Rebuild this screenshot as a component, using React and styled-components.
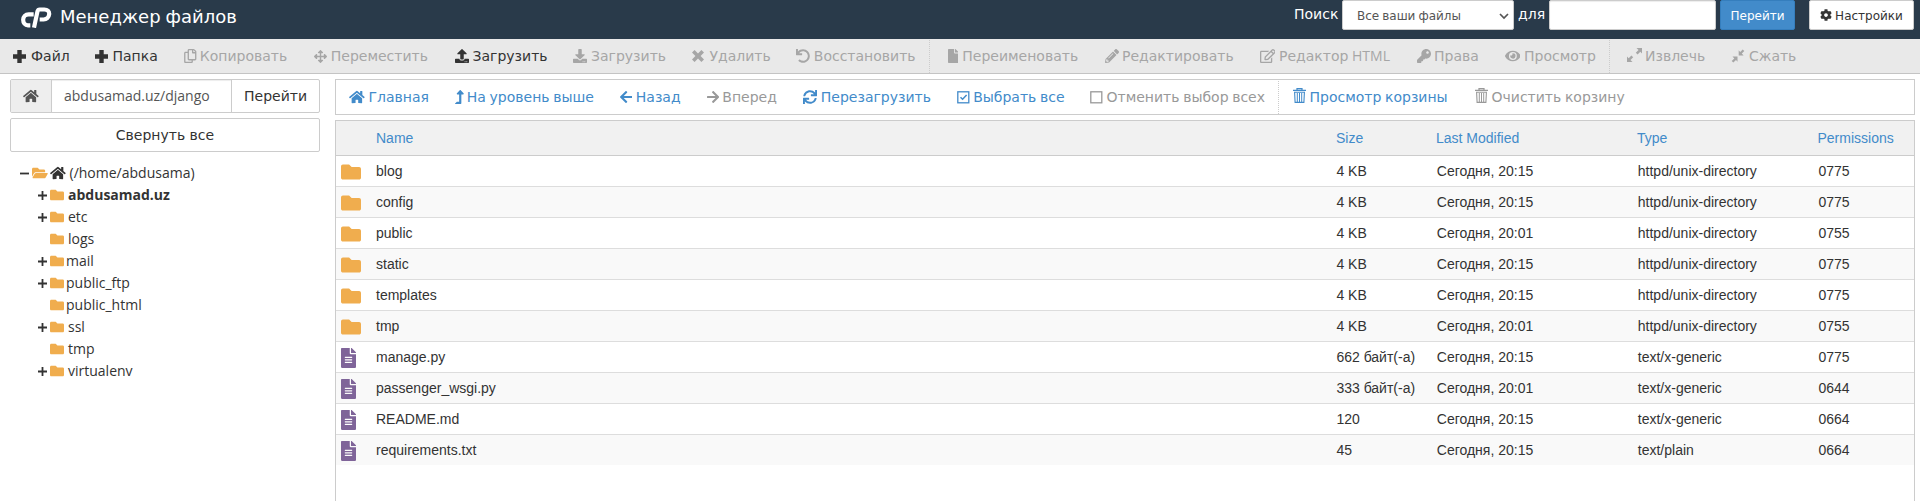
import React from "react";
import styled, { createGlobalStyle } from "styled-components";
import {
  FaRegCopy, FaArrowsAlt, FaUpload, FaDownload, FaUndo, FaFile, FaPencilAlt, FaRegEdit,
  FaKey, FaEye, FaHome, FaLevelUpAlt, FaArrowLeft, FaArrowRight, FaSync, FaCog, FaFolder,
  FaFolderOpen, FaFileAlt,
} from "react-icons/fa";

const latin = `"Open Sans", "DejaVu Sans", sans-serif`;
const cyrillic = `"DejaVu Sans", "Open Sans", sans-serif`;

const Global = createGlobalStyle`
  * { box-sizing: border-box; }
  body { margin: 0; background: #fff; color: #333; font: 14px/20px ${cyrillic}; word-spacing: -0.058em; overflow: hidden; }
`;

const Page = styled.div`
  height: 501px;
  display: flex;
  flex-direction: column;
  overflow: hidden;
`;

const Header = styled.header`
  height: 39px;
  flex: none;
  display: flex;
  align-items: flex-start;
  background: #293a4a;
  color: #fff;
  padding-left: 21px;
`;
const Brand = styled.div`
  width: 1273px;
  height: 34px;
  display: flex;
  align-items: center;
`;
const Logo = styled.span`
  width: 31px;
  display: flex;
  flex: none;
  margin-right: 8px;
`;
const Title = styled.h1`
  margin: 0;
  font: 400 18px/34px ${cyrillic};
`;
const SearchLabel = styled.span`
  width: ${(p) => p.$w}px;
  line-height: 28px;
  white-space: nowrap;
`;
const Select = styled.div`
  width: 172px;
  height: 30px;
  margin-right: 4px;
  padding: 2px 4px 0 14px;
  display: flex;
  align-items: center;
  justify-content: space-between;
  background: #fff;
  border: 1px solid #ccc;
  border-radius: 2px;
  color: #555;
  font-size: 12px;
`;
const SearchInput = styled.div`
  width: 167px;
  height: 30px;
  background: #fff;
  border: 1px solid #ccc;
  border-radius: 2px;
  box-shadow: inset 0 1px 1px rgba(0, 0, 0, 0.075);
`;
const SmallButton = styled.button`
  width: ${(p) => p.$w}px;
  height: 30px;
  margin: 0 0 0 ${(p) => p.$gap}px;
  padding: 2px 0 0;
  display: flex;
  align-items: center;
  justify-content: center;
  gap: 3px;
  border: 1px solid ${(p) => (p.$primary ? "#357ebd" : "#ccc")};
  border-radius: 2px;
  background: ${(p) => (p.$primary ? "#428bca" : "#fff")};
  color: ${(p) => (p.$primary ? "#fff" : "#333")};
  font: 12px/18px ${cyrillic};
  svg { margin-bottom: 2px; }
`;

const Toolbar = styled.nav`
  height: 35px;
  flex: none;
  display: flex;
  align-items: center;
  padding-left: 13px;
  background: #e9e9e9;
  border-bottom: 1px solid #c4c4c4;
`;
const Tool = styled.div`
  width: ${(p) => p.$w}px;
  flex: none;
  display: flex;
  align-items: center;
  white-space: pre;
  color: ${(p) => p.$color};
`;
const ToolIcon = styled.span`
  width: ${(p) => p.$w}px;
  height: 20px;
  flex: none;
  display: flex;
  align-items: center;
`;
const Latin = styled.span`
  font-family: ${latin};
`;
const Divider = styled.i`
  width: 1px;
  height: 33px;
  flex: none;
  margin-right: ${(p) => p.$gap}px;
  border-left: 1px dotted #ccc;
`;
const Glyph = styled.span`
  display: flex;
  flex: none;
  svg {
    width: ${(p) => p.$w}px;
    height: ${(p) => p.$h}px;
  }
`;

const Body = styled.main`
  flex: 1;
  display: flex;
  padding: 5px 5px 0 10px;
`;
const Sidebar = styled.aside`
  width: 310px;
  flex: none;
  margin-right: 15px;
`;
const PathRow = styled.div`
  display: flex;
  height: 34px;
  border: 1px solid #ccc;
  border-radius: 2px;
`;
const PathHome = styled.span`
  width: 41px;
  display: flex;
  align-items: center;
  justify-content: center;
  background: #eee;
  color: #555;
  border-right: 1px solid #ccc;
`;
const PathInput = styled.div`
  width: 180px;
  padding-left: 12px;
  font-family: ${latin};
  line-height: 32px;
  color: #555;
  border-right: 1px solid #ccc;
  box-shadow: inset 0 1px 1px rgba(0, 0, 0, 0.075);
`;
const PathGo = styled.div`
  flex: 1;
  text-align: center;
  line-height: 32px;
`;
const CollapseButton = styled.button`
  display: block;
  width: 310px;
  height: 34px;
  margin: 5px 0 10px;
  border: 1px solid #ccc;
  border-radius: 2px;
  background: #fff;
  color: #333;
  font: 14px/20px ${cyrillic};
`;
const TreeRow = styled.div`
  height: 22px;
  display: flex;
  align-items: center;
  padding-left: ${(p) => (p.$root ? 10 : 28)}px;
  font-family: ${latin};
  font-weight: ${(p) => (p.$bold ? 700 : 400)};
`;
const Toggle = styled.span`
  width: 12px;
  display: flex;
  flex: none;
  padding-top: 1px;
`;
const TreeIcon = styled.span`
  width: ${(p) => p.$w}px;
  display: flex;
  flex: none;
  color: ${(p) => p.$color || "#f0ad4e"};
`;

const Content = styled.section`
  flex: 1;
  display: flex;
  flex-direction: column;
`;
const ActionBar = styled.div`
  height: 36px;
  flex: none;
  display: flex;
  align-items: center;
  padding-left: 13px;
  margin-bottom: 5px;
  border: 1px solid #ccc;
`;
const Listing = styled.div`
  flex: 1;
  border: 1px solid #ccc;
  border-bottom: 0;
  font-family: "Liberation Sans", Arial, sans-serif;
  word-spacing: 0;
`;
const Row = styled.div`
  display: grid;
  grid-template-columns: 40px 960.4px 100.4px 201px 180.6px 1fr;
  align-items: center;
  height: 31px;
  background: ${(p) => (p.$odd ? "#f9f9f9" : "#fff")};
  border-bottom: 1px solid #ddd;
  &:last-child { height: 30px; border-bottom: 0; }
`;
const HeadRow = styled(Row)`
  grid-template-columns: 40px 960px 100px 201px 180.5px 1fr;
  height: 35px;
  background: #f1f1f1;
  border-bottom-color: #ccc;
  color: #428bca;
`;
const FileIcon = styled.span`
  display: flex;
  padding: 1px 0 0 5px;
  color: ${(p) => p.$color};
`;

const Icon = ({ as: Shape, w = 14, h = 14 }) => (
  <Glyph $w={w} $h={h}><Shape /></Glyph>
);
const Svg = ({ w, h, children }) => (
  <svg width={w} height={h} viewBox={`0 0 ${w} ${h}`} fill="currentColor">{children}</svg>
);
const LogoMark = () => (
  <svg width="31" height="21" viewBox="0 0 93 63" fill="none" stroke="#fff" strokeWidth="12.500">
    <path d="M38 22H23C13 22 6.500 29 6.500 38.500C6.500 48 12 55 21 55H28" />
    <path d="M39 62L49.500 13Q51 7.500 56 7.500H70C79 7.500 85.500 13 84.500 22C83.500 31 77 37.500 68 37.500H56" />
  </svg>
);
const BoldPlus = () => <Svg w={13} h={13}><path d="M4.300 0h4.400v4.300H13v4.400H8.700V13H4.300V8.700H0V4.300h4.300z" /></Svg>;
const BoldTimes = () => (
  <Svg w={12} h={12}><path d="M2.600 0L6 3.400 9.400 0 12 2.600 8.600 6 12 9.400 9.400 12 6 8.600 2.600 12 0 9.400 3.400 6 0 2.600z" /></Svg>
);
const TreePlus = () => <Svg w={9} h={9}><path d="M3.600 0h1.800v3.600H9v1.800H5.400V9H3.600V5.400H0V3.600h3.600z" /></Svg>;
const TreeMinus = () => <Svg w={9} h={9}><path d="M0 3.600h9v1.800H0z" /></Svg>;
const Caret = () => (
  <svg width="10" height="7" viewBox="0 0 10 7" fill="none" stroke="currentColor" strokeWidth="1.700">
    <path d="M1 1l4 4 4-4" />
  </svg>
);
const TrashIcon = () => (
  <svg width="13" height="18" viewBox="0 0 13 18" fill="none" stroke="currentColor">
    <path d="M4 1.800V.6h5v1.200M0 2.300h13" strokeWidth="1.200" />
    <path d="M1.600 4.300h9.800l-.5 10.100H2.100z" strokeWidth="1.100" />
    <path d="M4.300 5v9M6.500 5v9M8.700 5v9" strokeWidth="1" />
  </svg>
);
const BoxIcon = ({ checked }) => (
  <svg width="13" height="13" viewBox="0 0 13 13" fill="none" stroke="currentColor">
    <rect x=".8" y=".8" width="11" height="11" strokeWidth="1.300" />
    {checked && <path d="M3.500 6.200l2.100 2.100 4-4.200" strokeWidth="1.500" />}
  </svg>
);
const ExpandIcon = () => (
  <Svg w={15} h={16}>
    <path d="M9.500 0H15v5.500l-1.700-1.700-2.700 2.700-1.800-1.800 2.700-2.700zM5.500 14H0V8.500l1.700 1.700 2.700-2.700 1.800 1.800-2.700 2.700z" />
  </Svg>
);
const CompressIcon = () => (
  <Svg w={14} h={15}>
    <path d="M7.700 6.500V1.300l1.500 1.600L11.700.4 13.300 2l-2.500 2.500 1.800 2zM6.500 7.500v5.200L5 11.100l-2.700 2.500L.7 12l2.600-2.500-1.800-2z" />
  </Svg>
);

const DARK = "#333";
const OFF = "#a6a6a6";
const LINK = "#428bca";
const MUTED = "#999";

const tools = [
  [<BoldPlus />, "Файл", 82, 18, DARK],
  [<BoldPlus />, "Папка", 89, 17.5, DARK],
  [<Icon as={FaRegCopy} w={12.5} />, "Копировать", 130, 15.8, OFF],
  [<Icon as={FaArrowsAlt} w={13} h={13} />, "Переместить", 141, 16.8, OFF],
  [<Icon as={FaUpload} />, "Загрузить", 118, 17.5, DARK],
  [<Icon as={FaDownload} />, "Загрузить", 119, 18, OFF],
  [<BoldTimes />, "Удалить", 104, 17.5, OFF],
  [<Icon as={FaUndo} />, "Восстановить", 133, 17.8, OFF],
  null,
  [<Icon as={FaFile} w={10.5} />, "Переименовать", 157, 14.8, OFF],
  [<Icon as={FaPencilAlt} />, "Редактировать", 155, 17.5, OFF],
  [<Icon as={FaRegEdit} w={15.75} />, <>Редактор <Latin>HTML</Latin></>, 157, 19.5, OFF],
  [<Icon as={FaKey} />, "Права", 88, 17.5, OFF],
  [<Icon as={FaEye} w={15.75} />, "Просмотр", 104, 19.5, OFF],
  null,
  [<ExpandIcon />, "Извлечь", 104, 18, OFF],
  [<CompressIcon />, "Сжать", 70, 18, OFF],
];
const actions = [
  [<Icon as={FaHome} w={15.75} />, "Главная", 106, 19.5, LINK],
  [<Icon as={FaLevelUpAlt} w={8.75} />, "На уровень выше", 165, 11.8, LINK],
  [<Icon as={FaArrowLeft} w={12.25} />, "Назад", 87, 15.8, LINK],
  [<Icon as={FaArrowRight} w={12.25} />, "Вперед", 96, 15.3, MUTED],
  [<Icon as={FaSync} />, "Перезагрузить", 154, 17.8, LINK],
  [<BoxIcon checked />, "Выбрать все", 133, 16.2, LINK],
  [<BoxIcon />, "Отменить выбор всех", 188, 16.5, MUTED],
  null,
  [<TrashIcon />, "Просмотр корзины", 182, 16.5, LINK],
  [<TrashIcon />, "Очистить корзину", 160, 16.5, MUTED],
];
const tree = [
  ["abdusamad.uz", true, 18, true],
  ["etc", true, 18],
  ["logs", false, 18],
  ["mail", true, 16],
  ["public_ftp", true, 16],
  ["public_html", false, 16],
  ["ssl", true, 18],
  ["tmp", false, 18],
  ["virtualenv", true, 18],
];
const DIR = "httpd/unix-directory";
const files = [
  ["blog", "4 KB", "20:15", DIR, "0775"],
  ["config", "4 KB", "20:15", DIR, "0775"],
  ["public", "4 KB", "20:01", DIR, "0755"],
  ["static", "4 KB", "20:15", DIR, "0775"],
  ["templates", "4 KB", "20:15", DIR, "0775"],
  ["tmp", "4 KB", "20:01", DIR, "0755"],
  ["manage.py", "662 байт(-а)", "20:15", "text/x-generic", "0775"],
  ["passenger_wsgi.py", "333 байт(-а)", "20:01", "text/x-generic", "0644"],
  ["README.md", "120", "20:15", "text/x-generic", "0664"],
  ["requirements.txt", "45", "20:15", "text/plain", "0664"],
];

const ToolItems = ({ items, gap }) =>
  items.map((t, i) =>
    t ? (
      <Tool key={i} $w={t[2]} $color={t[4]}>
        <ToolIcon $w={t[3]}>{t[0]}</ToolIcon>
        <span>{t[1]}</span>
      </Tool>
    ) : (
      <Divider key={i} $gap={gap} />
    )
  );

export default function App() {
  return (
    <Page>
      <Global />
      <Header>
        <Brand>
          <Logo><LogoMark /></Logo>
          <Title>Менеджер файлов</Title>
        </Brand>
        <SearchLabel $w={48}>Поиск</SearchLabel>
        <Select>Все ваши файлы<Caret /></Select>
        <SearchLabel $w={31}>для</SearchLabel>
        <SearchInput />
        <SmallButton $primary $w={75} $gap={4}>Перейти</SmallButton>
        <SmallButton $w={105} $gap={14}><FaCog size={12} />Настройки</SmallButton>
      </Header>
      <Toolbar><ToolItems items={tools} gap={17.5} /></Toolbar>
      <Body>
        <Sidebar>
          <PathRow>
            <PathHome><Icon as={FaHome} w={15.75} /></PathHome>
            <PathInput>abdusamad.uz/django</PathInput>
            <PathGo>Перейти</PathGo>
          </PathRow>
          <CollapseButton>Свернуть все</CollapseButton>
          <TreeRow $root>
            <Toggle><TreeMinus /></Toggle>
            <TreeIcon $w={18}><Icon as={FaFolderOpen} w={15.75} /></TreeIcon>
            <TreeIcon $w={19.5} $color="#333"><Icon as={FaHome} w={15.75} /></TreeIcon>
            (/home/abdusama)
          </TreeRow>
          {tree.map(([name, expandable, w, bold]) => (
            <TreeRow key={name} $bold={bold}>
              <Toggle>{expandable && <TreePlus />}</Toggle>
              <TreeIcon $w={w}><Icon as={FaFolder} /></TreeIcon>
              {name}
            </TreeRow>
          ))}
        </Sidebar>
        <Content>
          <ActionBar><ToolItems items={actions} gap={14} /></ActionBar>
          <Listing>
            <HeadRow>
              <span /><span>Name</span><span>Size</span><span>Last Modified</span><span>Type</span><span>Permissions</span>
            </HeadRow>
            {files.map(([name, size, time, type, perm], i) => (
              <Row key={name} $odd={i % 2 === 1}>
                <FileIcon $color={type === DIR ? "#f0ad4e" : "#7f6499"}>
                  {type === DIR ? <Icon as={FaFolder} w={20} h={20} /> : <Icon as={FaFileAlt} w={15} h={20} />}
                </FileIcon>
                <span>{name}</span>
                <span>{size}</span>
                <span>Сегодня, {time}</span>
                <span>{type}</span>
                <span>{perm}</span>
              </Row>
            ))}
          </Listing>
        </Content>
      </Body>
    </Page>
  );
}
